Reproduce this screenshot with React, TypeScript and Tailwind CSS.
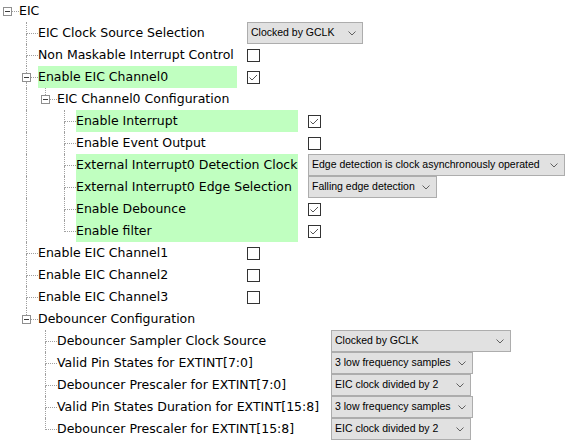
import React from 'react';

type Value =
  | { kind: 'check'; checked: boolean }
  | { kind: 'select'; text: string; width: string }
  | null;

type Node = {
  label: string;
  depth: number;
  guides: boolean[]; // pass-through lines for columns 1..depth-1
  last: boolean;
  expander?: boolean;
  green?: boolean;
  labelW?: string;
  value?: Value;
};

const L1 = 'w-[199px]';
const L2 = 'w-[264px]';
const L3 = 'w-[222px]';

const rows: Node[] = [
  { label: 'EIC', depth: 0, guides: [], last: true, expander: true },
  { label: 'EIC Clock Source Selection', depth: 1, guides: [], last: false, labelW: L1, value: { kind: 'select', text: 'Clocked by GCLK', width: 'w-[116px]' } },
  { label: 'Non Maskable Interrupt Control', depth: 1, guides: [], last: false, labelW: L1, value: { kind: 'check', checked: false } },
  { label: 'Enable EIC Channel0', depth: 1, guides: [], last: false, expander: true, green: true, labelW: L1, value: { kind: 'check', checked: true } },
  { label: 'EIC Channel0 Configuration', depth: 2, guides: [true], last: true, expander: true },
  { label: 'Enable Interrupt', depth: 3, guides: [true, false], last: false, green: true, labelW: L3, value: { kind: 'check', checked: true } },
  { label: 'Enable Event Output', depth: 3, guides: [true, false], last: false, labelW: L3, value: { kind: 'check', checked: false } },
  { label: 'External Interrupt0 Detection Clock', depth: 3, guides: [true, false], last: false, green: true, labelW: L3, value: { kind: 'select', text: 'Edge detection is clock asynchronously operated', width: 'w-[257px]' } },
  { label: 'External Interrupt0 Edge Selection', depth: 3, guides: [true, false], last: false, green: true, labelW: L3, value: { kind: 'select', text: 'Falling edge detection', width: 'w-[129px]' } },
  { label: 'Enable Debounce', depth: 3, guides: [true, false], last: false, green: true, labelW: L3, value: { kind: 'check', checked: true } },
  { label: 'Enable filter', depth: 3, guides: [true, false], last: true, green: true, labelW: L3, value: { kind: 'check', checked: true } },
  { label: 'Enable EIC Channel1', depth: 1, guides: [], last: false, labelW: L1, value: { kind: 'check', checked: false } },
  { label: 'Enable EIC Channel2', depth: 1, guides: [], last: false, labelW: L1, value: { kind: 'check', checked: false } },
  { label: 'Enable EIC Channel3', depth: 1, guides: [], last: false, labelW: L1, value: { kind: 'check', checked: false } },
  { label: 'Debouncer Configuration', depth: 1, guides: [], last: true, expander: true },
  { label: 'Debouncer Sampler Clock Source', depth: 2, guides: [false], last: false, labelW: L2, value: { kind: 'select', text: 'Clocked by GCLK', width: 'w-[180px]' } },
  { label: 'Valid Pin States for EXTINT[7:0]', depth: 2, guides: [false], last: false, labelW: L2, value: { kind: 'select', text: '3 low frequency samples', width: 'w-[142px]' } },
  { label: 'Debouncer Prescaler for EXTINT[7:0]', depth: 2, guides: [false], last: false, labelW: L2, value: { kind: 'select', text: 'EIC clock divided by 2', width: 'w-[140px]' } },
  { label: 'Valid Pin States Duration for EXTINT[15:8]', depth: 2, guides: [false], last: false, labelW: L2, value: { kind: 'select', text: '3 low frequency samples', width: 'w-[142px]' } },
  { label: 'Debouncer Prescaler for EXTINT[15:8]', depth: 2, guides: [false], last: true, labelW: L2, value: { kind: 'select', text: 'EIC clock divided by 2', width: 'w-[140px]' } },
];

const dot = 'border-dotted border-[#a0a0a0]';

const Guide = ({ on }: { on: boolean }) => (
  <div className="w-[19px] h-full shrink-0 flex">
    <div className="w-[7px]" />
    {on && <div className={`h-full border-l ${dot}`} />}
  </div>
);

const Connector = ({ root, last, expander }: { root: boolean; last: boolean; expander?: boolean }) => {
  if (expander) {
    return (
      <div className="w-[19px] h-full shrink-0 flex flex-col">
        <div className="h-[7px] flex">
          <div className="w-[7px]" />
          {!root && <div className={`h-full border-l ${dot}`} />}
        </div>
        <div className="h-[9px] flex items-center">
          <div className="w-[3px]" />
          <div className="w-[9px] h-[9px] border border-[#8f8f8f] bg-white flex items-center justify-center shrink-0">
            <div className="w-[5px] h-px bg-[#3c3c3c]" />
          </div>
          <div className={`flex-1 h-0 border-t ${dot}`} />
        </div>
        <div className="flex-1 flex">
          <div className="w-[7px]" />
          {!last && <div className={`h-full border-l ${dot}`} />}
        </div>
      </div>
    );
  }
  return (
    <div className="w-[19px] h-full shrink-0 flex flex-col">
      <div className="h-[12px] flex">
        <div className="w-[7px]" />
        <div className={`flex-1 border-l border-b ${dot}`} />
      </div>
      <div className="flex-1 flex">
        <div className="w-[7px]" />
        {!last && <div className={`h-full border-l ${dot}`} />}
      </div>
    </div>
  );
};

const Checkbox = ({ checked }: { checked: boolean }) => (
  <div className="w-[13px] h-[13px] border border-[#333333] bg-white">
    {checked && (
      <svg width="11" height="11" viewBox="0 0 11 11">
        <path d="M1.5 5.5 L4 8 L9 3" fill="none" stroke="#555555" strokeWidth="1" />
      </svg>
    )}
  </div>
);

const Select = ({ text, width }: { text: string; width: string }) => (
  <div
    className={`${width} h-[22px] border border-[#adadad] bg-[#e1e1e1] flex items-center pl-[3px] pr-[6px] text-[10.5px] text-black`}
    style={{ fontFamily: '"Liberation Sans", Arial, sans-serif' }}
  >
    <span className="flex-1 whitespace-nowrap">{text}</span>
    <svg width="8" height="5" viewBox="0 0 8 5" className="shrink-0 ml-1">
      <path d="M0.5 0.5 L4 4 L7.5 0.5" fill="none" stroke="#606060" strokeWidth="1" />
    </svg>
  </div>
);

const Row = ({ n }: { n: Node }) => (
  <div className="h-[22px] flex items-stretch">
    {Array.from({ length: n.depth }).map((_, k) =>
      k === 0 ? <Guide key={k} on={false} /> : <Guide key={k} on={n.guides[k - 1]} />
    )}
    <Connector root={n.depth === 0} last={n.last} expander={n.expander} />
    <div
      className={`${n.labelW ?? ''} h-full shrink-0 flex items-center whitespace-nowrap text-[12.5px] text-black ${
        n.green ? 'bg-[#c0ffc0]' : ''
      }`}
    >
      {n.label}
    </div>
    {n.value && (
      <div className="ml-[10px] flex items-center">
        {n.value.kind === 'check' ? (
          <Checkbox checked={n.value.checked} />
        ) : (
          <Select text={n.value.text} width={n.value.width} />
        )}
      </div>
    )}
  </div>
);

export default function App() {
  return (
    <div
      className="w-[570px] h-[447px] bg-white overflow-hidden"
      style={{ fontFamily: '"DejaVu Sans", Verdana, sans-serif' }}
    >
      {rows.map((n, i) => (
        <Row key={i} n={n} />
      ))}
    </div>
  );
}
